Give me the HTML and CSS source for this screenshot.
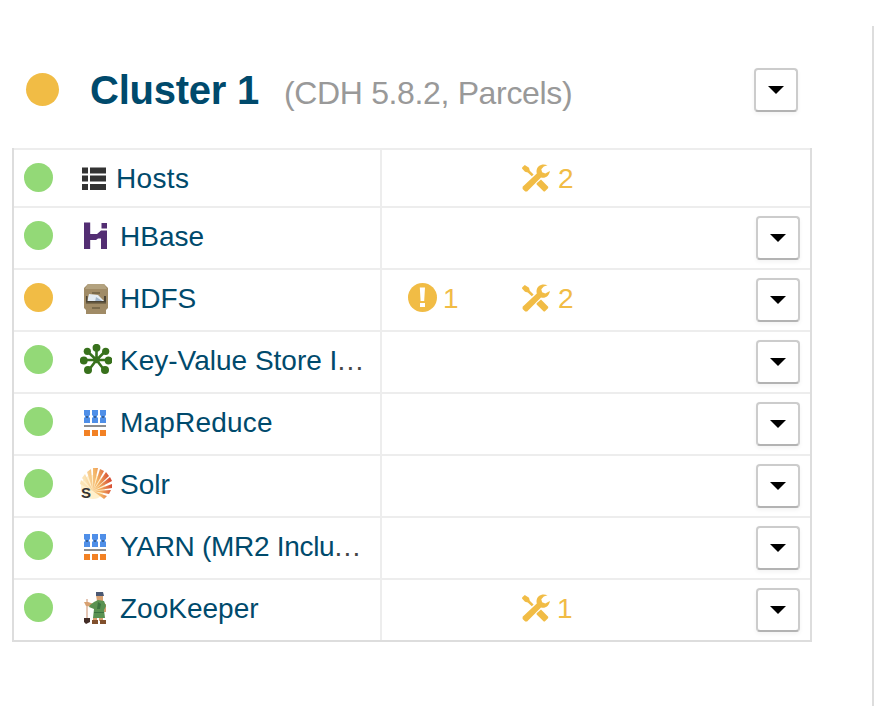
FILE: index.html
```html
<!DOCTYPE html>
<html lang="en">
<head>
<meta charset="utf-8">
<title>Cluster 1</title>
<link rel="stylesheet" href="styles.css">
</head>
<body>
<svg class="defs" aria-hidden="true">
  <symbol id="tools" viewBox="0 0 28 28">
    <path d="M.3 3.200 2.800 1 7 3.800l.8 3L11.600 10.500 9.800 12.300 5.800 8.600 3 7.800 0 4.500zM14.600 19.300l4.400-3.700 7.200 7.200v1.200l-3.400 3.600h-1l-7.200-7.200zM25.500 1.300C20-1.500 13 2.500 14.800 9.500L.6 22.800v2.200l2.600 2.500h1.900L19 13.400c4.200 1.200 8.300-1.500 8.900-6.500l-4.600 2.500-3.200-1.200-.8-3 2.500-2.700z"/>
  </symbol>
  <symbol id="mr" viewBox="0 0 32 32">
    <path fill="#4f8fe8" d="M4 4h6v5.500H9v2h1V17H4v-5.500h1v-2H4zM12 4h6v5.500h-1v2h1V17h-6v-5.500h1v-2h-1zM20 4h6v5.500h-1v2h1V17h-6v-5.500h1v-2h-1z"/>
    <path fill="#396195" d="M6 10h2v2H6zm8 0h2v2h-2zm8 0h2v2h-2z"/>
    <path fill="#8e8e8e" d="M4 19h22v2H4z"/>
    <path fill="#f28124" d="M4 24h6v6H4zm8 0h6v6h-6zm8 0h6v6h-6z"/>
  </symbol>
</svg>
<main class="panel">
  <header class="head">
    <span class="dot warn"></span>
    <h1>Cluster 1</h1>
    <span class="version">(CDH 5.8.2, Parcels)</span>
    <button class="menu" aria-label="Cluster actions"></button>
  </header>
  <section class="services">
    <div class="row hosts">
      <div class="name"><span class="dot"></span>
        <svg class="icon" viewBox="0 0 32 32"><path fill="#333" d="M2 5.500h6v6H2zm8 0h16v6H10zM2 13.500h6v6H2zm8 0h16v6H10zM2 22h6v6H2zm8 0h16v6H10z"/></svg>
        <a>Hosts</a></div>
      <div class="health"></div>
      <div class="config"><svg class="tools"><use href="#tools"/></svg><span>2</span></div>
    </div>
    <div class="row">
      <div class="name"><span class="dot"></span>
        <svg class="icon" viewBox="0 0 32 32"><path fill="#532e73" d="M4 2.500h6.200V14H17l4-3.500h6V29h-6V18.500h-3L16 20h-5.800v9H4zM21.500 3H27v5.500h-5.500z"/></svg>
        <a>HBase</a></div>
      <div class="health"></div><div class="config"></div>
      <button class="menu" aria-label="HBase actions"></button>
    </div>
    <div class="row">
      <div class="name"><span class="dot warn"></span>
        <svg class="icon" viewBox="0 0 32 32"><path fill="#a08b66" d="M8 2h16l4 4v20l-2 2v4H6v-4l-2-2V6z"/><path fill="#b3a27f" d="M8 2h16l3 5H5z"/><path fill="#7b6b4c" d="M12 10h8v2h-8zm0 15h8v2h-8zM6 20h20v2H6z"/><path fill="#e4ecf3" d="m9 12 9 1 7 7H7z"/><path fill="#a4b8cc" d="m16 15 8 5H15z"/><path fill="#4d4535" d="M6 19h20v1.500H6zM24 14h2v5h-2zM6 14h1.500v5H6z"/></svg>
        <a>HDFS</a></div>
      <div class="health"><span class="alert"><svg viewBox="0 0 29 29"><path d="M11.800 4.500h5.200l-.8 13.500h-3.600zM12 20h5v4h-5z"/></svg></span><span>1</span></div>
      <div class="config"><svg class="tools"><use href="#tools"/></svg><span>2</span></div>
      <button class="menu" aria-label="HDFS actions"></button>
    </div>
    <div class="row">
      <div class="name"><span class="dot"></span>
        <svg class="icon" viewBox="0 0 32 32"><g stroke="#38711c" stroke-width="2.600"><path d="M16.500 16V4M16.500 16 7 7M16.500 16l9-9M16.500 16H4M16.500 16H29M16.500 16 8 27M16.500 16 25 27"/></g><g fill="#38711c"><circle cx="16.500" cy="3.800" r="3.900"/><circle cx="7.300" cy="7.300" r="3.600"/><circle cx="25.700" cy="7.300" r="3.600"/><circle cx="3.800" cy="16.500" r="3.900"/><circle cx="28.600" cy="16.500" r="3.900"/><circle cx="8" cy="26" r="4"/><circle cx="25" cy="26" r="4"/><circle cx="16.500" cy="16" r="3.200"/></g></svg>
        <a class="kv">Key-Value Store I<i>...</i></a></div>
      <div class="health"></div><div class="config"></div>
      <button class="menu" aria-label="Key-Value Store actions"></button>
    </div>
    <div class="row">
      <div class="name"><span class="dot"></span><svg class="icon"><use href="#mr"/></svg><a class="mapred">MapReduce</a></div>
      <div class="health"></div><div class="config"></div>
      <button class="menu" aria-label="MapReduce actions"></button>
    </div>
    <div class="row">
      <div class="name"><span class="dot"></span>
        <svg class="icon" viewBox="0 0 32 32"><defs><linearGradient id="sun" gradientUnits="userSpaceOnUse" x1="6" y1="16" x2="32" y2="10"><stop offset="0" stop-color="#fbe3b5"/><stop offset=".45" stop-color="#f3b263"/><stop offset="1" stop-color="#d3402c"/></linearGradient></defs>
        <circle cx="13" cy="19" r="12" fill="#fff0cc"/>
        <path fill="url(#sun)" d="M13 23 0 16l1-4zM13 23 2 10l3-4zM13 23 7 4l4-3zM13 23 13 0l5 0zM13 23 20 1l4 2zM13 23 26 4l3 4zM13 23 30 9l2 4zM13 23l19-7v4zM13 23l18-1-2 4zM13 23l14 5-3 3z"/>
        <text x="1" y="29.500" class="solr-s">S</text></svg>
        <a>Solr</a></div>
      <div class="health"></div><div class="config"></div>
      <button class="menu" aria-label="Solr actions"></button>
    </div>
    <div class="row">
      <div class="name"><span class="dot"></span><svg class="icon"><use href="#mr"/></svg><a class="yarn">YARN (MR2 Inclu<i>...</i></a></div>
      <div class="health"></div><div class="config"></div>
      <button class="menu" aria-label="YARN actions"></button>
    </div>
    <div class="row">
      <div class="name"><span class="dot"></span>
        <svg class="icon" viewBox="0 0 32 32"><path stroke="#ddb59d" stroke-width="1.500" d="M7 7v20"/><path fill="#d7a070" d="M4 10h4l6 2v3l-8-1zM16 3h7v6h-6zM23 12h3v8h-3zM13 25h4v4h-4zm6 0h4v4h-4z"/><path fill="#5a9252" d="m14 10 4-2 6 1 2 5-2 4 1 8H13l1-9-5-2 1-2z"/><path fill="#3c7440" d="m18 10 3 2-1 5h-3zM14 20h10v1H14z"/><path fill="#4b5872" d="M16 0h7l1 4h-8z"/><path fill="#432d27" d="M4 26h6v4l-4 2-2-2z"/><path fill="#81502d" d="M12 28h6v4h-6zm8 0h6v4h-6z"/></svg>
        <a>ZooKeeper</a></div>
      <div class="health"></div>
      <div class="config"><svg class="tools"><use href="#tools"/></svg><span class="one">1</span></div>
      <button class="menu" aria-label="ZooKeeper actions"></button>
    </div>
  </section>
</main>
</body>
</html>
```
FILE: styles.css
```css
* { box-sizing: border-box; }
body {
  margin: 0;
  height: 706px;
  overflow: hidden;
  background: #fff;
  color: #004a6c;
  font: 28px/34px "Liberation Sans", Arial, sans-serif;
}
.defs { display: none; }
.panel {
  width: 874px;
  height: 680px;
  margin-top: 26px;
  padding: 42px 60px 0 12px;
  border-right: 2px solid #ddd;
}
.head { display: flex; height: 80px; padding: 0 14px; }
.head .dot { width: 33px; height: 33px; margin: 5px 31px 0 0; }
h1 { width: 194px; margin: 0; font-size: 40px; line-height: 44px; letter-spacing: -.25px; white-space: nowrap; }
.version { color: #999; font-size: 32px; line-height: 50px; letter-spacing: -.35px; white-space: nowrap; }
.head .menu { margin: 0 0 0 auto; }
.services { border: 2px solid #ddd; border-top: 0; }
.row { display: flex; height: 62px; border-top: 2px solid #ededed; }
.hosts { height: 58px; }
.name {
  display: flex;
  width: 368px;
  padding-left: 10px;
  border-right: 2px solid #ededed;
  white-space: nowrap;
}
.dot {
  flex: none;
  width: 29px;
  height: 29px;
  margin: 13px 27px 0 0;
  border-radius: 50%;
  background: #93d977;
}
.warn { background: #f1bc45; }
.icon { flex: none; width: 32px; height: 32px; margin: 12px 8px 0 0; }
.hosts .icon { margin-right: 4px; }
.name a { line-height: 58px; }
.hosts a { letter-spacing: .35px; }
.mapred { letter-spacing: .2px; }
.yarn { letter-spacing: -.3px; }
.name i { color: #454545; font-style: normal; letter-spacing: 1.300px; }
.health { display: flex; width: 140px; padding-left: 26px; }
.config { display: flex; }
.health, .config { color: #f1bc45; line-height: 58px; }
.alert { width: 29px; height: 29px; margin: 13px 6px 0 0; border-radius: 50%; background: #f1bc45; }
.alert svg { display: block; width: 29px; height: 29px; fill: #fff; }
.tools { width: 28px; height: 28px; margin: 14px 8px 0 0; fill: #f1bc45; }
.one { margin-left: -1px; }
.menu {
  flex: none;
  display: flex;
  justify-content: center;
  align-items: center;
  width: 44px;
  height: 44px;
  margin: 8px 10px 0 auto;
  padding: 0;
  border: 2px solid #ccc;
  border-bottom-color: #b3b3b3;
  border-radius: 4px;
  background: #fff;
  box-shadow: 0 2px 4px rgba(0, 0, 0, .05);
}
.menu::before {
  content: "";
  border: 8px solid transparent;
  border-top-color: #000;
  border-bottom: 0;
}
.solr-s { font: bold 15px "Liberation Sans", sans-serif; fill: #333; }
```
